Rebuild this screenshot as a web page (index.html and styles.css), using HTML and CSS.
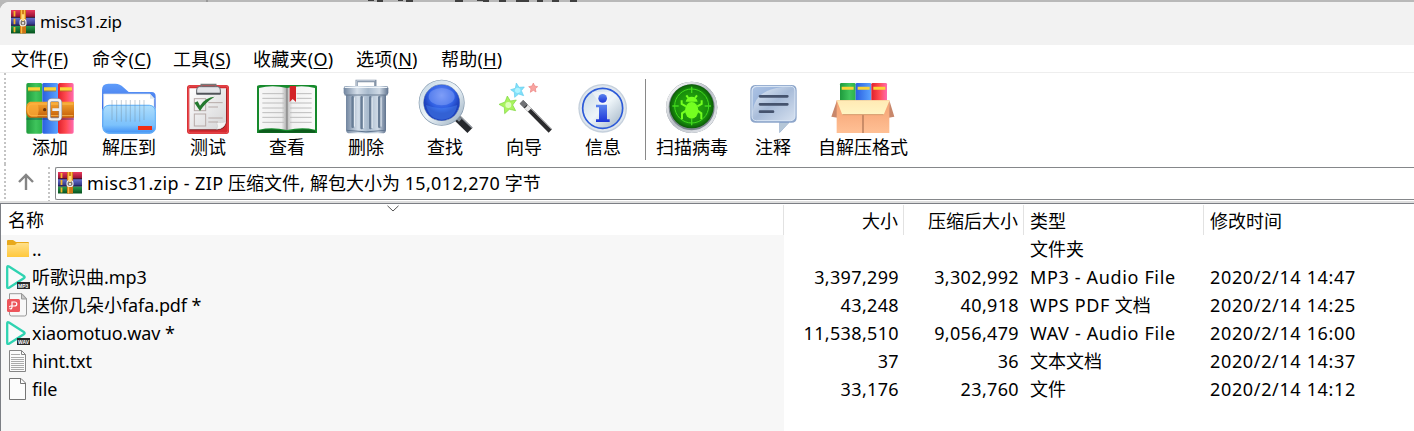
FILE: index.html
```html
<!DOCTYPE html>
<html lang="zh-CN">
<head>
<meta charset="utf-8">
<title>misc31.zip</title>
<link rel="stylesheet" href="styles.css">
</head>
<body>
<svg class="defs" width="0" height="0" aria-hidden="true">
  <defs>
    <linearGradient id="gGreen"><stop offset="0" stop-color="#1e9a3c"/><stop offset=".6" stop-color="#3fc45c"/><stop offset="1" stop-color="#2cb24a"/></linearGradient>
    <linearGradient id="gBlue"><stop offset="0" stop-color="#2a5fe0"/><stop offset="1" stop-color="#5aa4ff"/></linearGradient>
    <linearGradient id="gRed"><stop offset="0" stop-color="#e0202c"/><stop offset=".5" stop-color="#ff4a50"/><stop offset="1" stop-color="#ff6ab0"/></linearGradient>
    <linearGradient id="gBelt" x2="0" y2="1"><stop offset="0" stop-color="#f8a830"/><stop offset="1" stop-color="#c25c08"/></linearGradient>
    <linearGradient id="gSilver" x2="1" y2="1"><stop offset="0" stop-color="#fff"/><stop offset=".5" stop-color="#b9bec6"/><stop offset="1" stop-color="#eef0f4"/></linearGradient>
    <linearGradient id="gFolderBack" x2="0" y2="1"><stop offset="0" stop-color="#5f9dfa"/><stop offset="1" stop-color="#2046d8"/></linearGradient>
    <linearGradient id="gFolder" x2="0" y2="1"><stop offset="0" stop-color="#a9dcfc" stop-opacity=".93"/><stop offset=".7" stop-color="#7cc2fc"/><stop offset="1" stop-color="#3d8df4"/></linearGradient>
    <linearGradient id="gPaper" x2="1" y2="1"><stop offset="0" stop-color="#fff"/><stop offset="1" stop-color="#d4d4d6"/></linearGradient>
    <linearGradient id="gPage"><stop offset="0" stop-color="#f7f7f7"/><stop offset=".8" stop-color="#eee"/><stop offset="1" stop-color="#a9a9a9"/></linearGradient>
    <linearGradient id="gPage2"><stop offset="0" stop-color="#bbb"/><stop offset=".2" stop-color="#f2f2f2"/><stop offset="1" stop-color="#fafafa"/></linearGradient>
    <linearGradient id="gBin"><stop offset="0" stop-color="#71859f"/><stop offset=".3" stop-color="#d5dfea"/><stop offset=".55" stop-color="#a7b9cc"/><stop offset=".8" stop-color="#cfdae6"/><stop offset="1" stop-color="#60738e"/></linearGradient>
    <radialGradient id="gLens" cy=".3"><stop offset="0" stop-color="#6e90f4"/><stop offset=".7" stop-color="#3161e4"/><stop offset="1" stop-color="#1f43bd"/></radialGradient>
    <linearGradient id="gRim" x2="1" y2="1"><stop offset="0" stop-color="#c4d6e4"/><stop offset=".5" stop-color="#eef5f9"/><stop offset="1" stop-color="#9cb0c2"/></linearGradient>
    <linearGradient id="gInfo" x2="0" y2="1"><stop offset="0" stop-color="#5c86ee"/><stop offset="1" stop-color="#1c35d8"/></linearGradient>
    <radialGradient id="gScan"><stop offset="0" stop-color="#2cb50c"/><stop offset=".8" stop-color="#178a0c"/><stop offset="1" stop-color="#0c5c08"/></radialGradient>
    <linearGradient id="gNote" x2="1" y2="1"><stop offset="0" stop-color="#e6effa"/><stop offset=".5" stop-color="#a8bcd9"/><stop offset="1" stop-color="#d5e0ef"/></linearGradient>
    <linearGradient id="gBox" x2="0" y2="1"><stop offset="0" stop-color="#f4a070"/><stop offset="1" stop-color="#ffc095"/></linearGradient>
    <linearGradient id="gFlap" x2="0" y2="1"><stop offset="0" stop-color="#ffeab4"/><stop offset="1" stop-color="#fff5c4"/></linearGradient>
    <linearGradient id="gDir" x2="0" y2="1"><stop offset="0" stop-color="#ffe08a"/><stop offset="1" stop-color="#ffc83c"/></linearGradient>
    <linearGradient id="gB1" x2="0" y2="1"><stop offset="0" stop-color="#e93a5c"/><stop offset="1" stop-color="#8c0c30"/></linearGradient>
    <linearGradient id="gB2" x2="0" y2="1"><stop offset="0" stop-color="#6a74d0"/><stop offset="1" stop-color="#262a78"/></linearGradient>
    <linearGradient id="gB3" x2="0" y2="1"><stop offset="0" stop-color="#2c9c50"/><stop offset="1" stop-color="#04501c"/></linearGradient>
    <symbol id="rar" viewBox="0 0 24 22" preserveAspectRatio="none">
      <rect width="24" height="7" fill="url(#gB1)"/><rect y="7" width="24" height="7.5" fill="url(#gB2)"/><rect y="14.500" width="24" height="7" fill="url(#gB3)"/>
      <path d="M0 6.800h24M0 14h24" stroke="#20142e" stroke-width=".8"/>
      <path d="M3.500 1v5M3.500 8v5M3.500 15.500v5" stroke="#f5b72c" stroke-width="1.800"/>
      <rect x="9" width="6" height="21.500" fill="#cf7416"/><path d="M10.500 0v21.500M13.500 0v8" stroke="#f9be45" stroke-width="1.300"/>
      <path d="M9 11Q9 8.500 12 8.500T15 11V12.500Q15 14.500 12 14.500T9 12.500Z" fill="#80756c" stroke="#eee" stroke-width="1.100"/><path d="M12 4v6" stroke="#ffdc7a" stroke-width="2.400"/><path d="M12 11v2" stroke="#fff" stroke-width="1.500"/>
    </symbol>
    <symbol id="play" viewBox="0 0 24 24">
      <path d="M1.200 2.500Q1.200 .5 3 1.500L17.800 11Q19.500 12.200 17.800 13.300L3 22.800Q1.200 23.600 1.200 22Z" fill="#fafafa" stroke="#2fd3b1" stroke-width="2.300" stroke-linejoin="round"/>
      <rect x="11" y="17" width="13" height="7" fill="#292929"/>
    </symbol>
  </defs>
</svg>

<div class="backdrop"><svg class="behind" viewBox="0 0 1414 2"><path d="M368 0h6v1h-6zM377 0h6v2h-6zM398 0h5v1h-5zM406 0h7v2h-7zM455 0h8v2h-8zM477 0h12v1h-12zM483 1h6v1h-6zM499 0h7v2h-7zM516 0h13v2h-13zM537 0h6v2h-6zM552 0h7v2h-7zM570 0h7v2h-7z" fill="#404040"/><path d="M206 0h2v2h-2z" fill="#999"/></svg></div>
<main class="window">
  <header class="titlebar"><svg class="title-icon"><use href="#rar"/></svg><span>misc31.zip</span></header>
  <nav class="menu">
    <span class="m1">文件(<u>F</u>)</span><span class="m2">命令(<u>C</u>)</span><span class="m3">工具(<u>S</u>)</span><span class="m4">收藏夹(<u>O</u>)</span><span class="m5">选项(<u>N</u>)</span><span>帮助(<u>H</u>)</span>
  </nav>

  <section class="toolbar">
    <div class="tool"><svg viewBox="69 33 162 162">
      <rect x="79" y="39" width="48" height="152" rx="5" fill="url(#gGreen)"/><rect x="127" y="39" width="47" height="152" rx="4" fill="url(#gBlue)"/><rect x="174" y="39" width="47" height="152" rx="5" fill="url(#gRed)"/>
      <path d="M84 57h36M132 57h36M180 57h36" stroke="#fbd437" stroke-width="10"/><path d="M84 63h36M132 63h36M180 63h36" stroke="#a07a20" stroke-width="2"/>
      <path d="M79 143h143v7H79Z" fill="#103060" opacity=".35"/>
      <path d="M90 95H222V143H90Q78 140 78 119T90 95Z" fill="url(#gBelt)"/><path d="M84 119Q84 102 95 102H220M84 119Q84 136 95 137H220" fill="none" stroke="#ffc45a" stroke-width="2.500"/><path d="M80 119Q82 99 95 99H112Q120 119 112 140H95Q82 138 80 119Z" fill="#ffb13c" opacity=".7"/>
      <circle cx="134" cy="119" r="5" fill="#6b3408"/><rect x="147" y="90" width="34" height="58" rx="8" fill="none" stroke="#8c8c90" stroke-width="11"/><rect x="147" y="90" width="34" height="58" rx="8" fill="none" stroke="#f0f1f4" stroke-width="7"/><path d="M157 119h25" stroke="#e9edf2" stroke-width="8"/>
    </svg><span>添加</span></div>
    <div class="tool"><svg viewBox="306 33 162 162">
      <path d="M306 60Q306 41 325 41H346Q360 41 370 52L386 66H455Q467 66 467 80V170H306Z" fill="url(#gFolderBack)"/>
      <path d="M311 72H450L462 85V150H311Z" fill="#fff" stroke="#d7dfe8" stroke-width="2"/><path d="M450 72v14h12" fill="#dce7f0"/>
      <rect x="307" y="104" width="161" height="87" rx="20" fill="url(#gFolder)"/><rect x="309" y="106" width="157" height="83" rx="18" fill="none" stroke="#68b4f8" stroke-width="3"/>
      <path d="M336 90v60M350 90v65M364 90v65M378 90v65M391 90v65M405 90v65M419 90v65M432 90v60" stroke="#728ba0" stroke-width="2.500" opacity=".5"/>
      <rect x="414" y="168" width="42" height="12" fill="#f02c12"/>
    </svg><span>解压到</span></div>
    <div class="tool"><svg viewBox="543 33 162 162">
      <rect x="561" y="45" width="126" height="147" rx="9" fill="#d52b31"/><rect x="565" y="48" width="119" height="141" rx="7" fill="none" stroke="#ec5557" stroke-width="3"/>
      <path d="M570 57H680V157Q676 179 652 181H570Z" fill="#802024"/><path d="M568 55H678V155Q674 176 650 178H568Z" fill="url(#gPaper)"/>
      <path d="M678 155Q665 160 650 157Q656 170 650 178Q674 176 678 155Z" fill="#f4f4f4" stroke="#bbb"/>
      <path d="M590 73V60Q590 50 598 50H653Q661 50 661 60V73Z" fill="#e2e4e8" stroke="#62656b" stroke-width="3"/><path d="M604 50V44H647V50" fill="none" stroke="#777" stroke-width="5"/><path d="M590 70h72" stroke="#505358" stroke-width="4"/>
      <g fill="none" stroke="#b6aaa8" stroke-width="3"><rect x="583" y="86" width="34" height="36"/><rect x="583" y="132" width="34" height="36"/><path d="M625 98h43M625 111h29M625 144h43M625 156h29"/></g>
      <path d="M583 98L593 94 600 107Q617 81 644 80Q617 96 600 123Z" fill="#247a30"/>
    </svg><span>测试</span></div>
    <div class="tool"><svg viewBox="60 33 162 162">
      <path d="M51 50Q51 45 60 45H222Q231 45 231 50V189H51Z" fill="#168a2c"/><path d="M56 182Q95 174 141 184Q187 174 226 182V188H56Z" fill="#0c5a1c"/>
      <path d="M57 54Q96 44 141 54V180Q96 170 57 179Z" fill="url(#gPage)"/><path d="M141 54Q186 44 225 54V179Q186 170 141 180Z" fill="url(#gPage2)"/>
      <path d="M67 71H132M67 85H132M67 99H132M67 114H132M67 128H132M67 142H132M67 157H132M150 99H215M150 114H215M150 128H215M150 142H215M150 157H215M170 71H215M170 85H215" stroke="#bcbcbc" stroke-width="3"/>
      <path d="M141 54v126" stroke="#777" stroke-width="3"/><path d="M149 48H168V96L158 87 149 96Z" fill="#d32328"/>
    </svg><span>查看</span></div>
    <div class="tool"><svg viewBox="297 33 162 162">
      <path d="M350 50V33H406V50" fill="none" stroke="#8494a8" stroke-width="7"/><path d="M350 49V32H405" fill="none" stroke="#dce4ee" stroke-width="2"/>
      <path d="M318 70H438V179Q438 190 427 190H329Q318 190 318 179Z" fill="url(#gBin)"/>
      <path d="M338 82v88M365 82v92M391 82v92M418 82v88" stroke="#687d96" stroke-width="8" stroke-linecap="round"/><path d="M343 82v88M370 82v92M396 82v92M423 82v88" stroke="#edf3f9" stroke-width="3"/>
      <path d="M320 181Q378 190 436 181" stroke="#627791" stroke-width="3" fill="none"/><rect x="311" y="48" width="134" height="27" rx="7" fill="url(#gBin)"/><path d="M314 52H442" stroke="#f0f5fa" stroke-width="4"/><path d="M314 75H442" stroke="#66788e" stroke-width="3"/>
    </svg><span>删除</span></div>
    <div class="tool"><svg viewBox="534 33 162 162">
      <path d="M653 145L690 181" stroke="#25272b" stroke-width="22"/><path d="M660 139L696 173" stroke="#93989f" stroke-width="4"/><path d="M650 148L658 140" stroke="#858f9a" stroke-width="20"/>
      <circle cx="605" cy="98" r="61" fill="none" stroke="#8398ad" stroke-width="16"/><circle cx="605" cy="98" r="61" fill="none" stroke="url(#gRim)" stroke-width="12"/><circle cx="605" cy="98" r="54" fill="url(#gLens)"/>
      <ellipse cx="605" cy="80" rx="39" ry="26" fill="#9eb6ff" opacity=".35"/><path d="M558 105Q604 124 652 105Q644 148 605 149Q567 148 558 105Z" fill="#5a9cff" opacity=".35"/>
    </svg><span>查找</span></div>
    <div class="tool"><svg viewBox="51 33 162 162">
      <path d="M125 96L211 183" stroke="#2b2b2d" stroke-width="14"/><path d="M130 94L215 179" stroke="#909094" stroke-width="3"/><path d="M124 95L137 108" stroke="#707175" stroke-width="15"/><path d="M139 110L149 120" stroke="#e8e8e8" stroke-width="15"/>
      <path d="M82 78L91 93 109 90 98 105 107 122 88 118 74 131 73 112 57 103 75 96Z" fill="#a9f45e" stroke="#7cd63c" stroke-width="2"/><circle cx="85" cy="105" r="9" fill="#dcffb8"/>
      <path d="M109 39L117 52 133 51 124 62 131 77 116 72 104 82 103 67 92 59 106 55Z" fill="#80e0fa" stroke="#62cbed" stroke-width="2"/><circle cx="113" cy="61" r="8" fill="#b0f4ff"/>
      <path d="M160 39L164 48 173 50 166 56 168 66 160 61 151 67 153 56 146 50 156 48Z" fill="#f8a4a0" stroke="#ec817e" stroke-width="2"/>
    </svg><span>向导</span></div>
    <div class="tool"><svg viewBox="288 33 162 162">
      <circle cx="368" cy="115" r="73" fill="#c5d0dc"/><circle cx="368" cy="115" r="69" fill="#dfe6ed"/><circle cx="368" cy="115" r="60" fill="url(#gRim)" stroke="#2c5ad8" stroke-width="5"/><path d="M368 115L335 65H400Z" fill="#fff" opacity=".45"/>
      <circle cx="368" cy="85" r="13" fill="url(#gInfo)"/><path d="M348 104H381V148H389V156H348V148H357V112H348Z" fill="url(#gInfo)"/>
    </svg><span>信息</span></div>
    <i class="separator"></i>
    <div class="tool scan"><svg viewBox="555 33 162 162">
      <circle cx="635" cy="112" r="77" fill="#7d878f"/><circle cx="635" cy="112" r="73" fill="none" stroke="url(#gSilver)" stroke-width="8"/><circle cx="635" cy="109" r="66" fill="url(#gScan)"/>
      <circle cx="635" cy="108" r="51" fill="none" stroke="#42d91d" stroke-width="3"/><path d="M635 50V69M635 147V166M577 108H596M674 108H693" stroke="#42d91d" stroke-width="4"/>
      <ellipse cx="635" cy="121" rx="20" ry="25" fill="#74ff20"/><path d="M617 95Q621 80 635 80T653 95Z" fill="#74ff20"/><path d="M625 84L619 76M645 84L651 76M618 109L605 102V91M652 109L665 102V91M618 122L606 130V148M652 122L664 130V148" stroke="#74ff20" stroke-width="6" fill="none"/>
    </svg><span>扫描病毒</span></div>
    <div class="tool note"><svg viewBox="138 33 162 162">
      <path d="M168 45H274Q290 45 290 61V143Q290 158 274 158H267L238 190V158H168Q151 158 151 143V61Q151 45 168 45Z" fill="#8ca5ca"/><path d="M170 49H272Q285 49 285 63V139Q285 152 271 152H170Q156 152 156 139V63Q156 49 170 49Z" fill="url(#gNote)" stroke="#dce8f6" stroke-width="3"/>
      <path d="M158 123Q166 59 248 51H171Q158 51 158 64Z" fill="#86a5d5" opacity=".6"/><path d="M240 159H267L239 187Z" fill="#b4c6d7"/><path d="M180 79H262M180 103H262M180 125H219" stroke="#45536e" stroke-width="8" stroke-linecap="round"/>
    </svg><span>注释</span></div>
    <div class="tool sfx"><svg viewBox="408 33 162 162">
      <rect x="420" y="39" width="47" height="60" rx="4" fill="url(#gGreen)"/><rect x="467" y="39" width="47" height="60" rx="4" fill="url(#gBlue)"/><rect x="514" y="39" width="47" height="60" rx="4" fill="url(#gRed)"/><path d="M425 55h36M473 55h36M520 55h36" stroke="#fbd437" stroke-width="9"/>
      <path d="M411 91L394 140 413 143ZM568 91L583 140 566 143Z" fill="#c8876b"/><path d="M410 91H568V189H410Z" fill="url(#gBox)"/><path d="M489 133v56" stroke="#b27757" stroke-width="4"/><path d="M410 91H569L551 134H427Z" fill="url(#gFlap)"/><path d="M427 134H551" stroke="#d59a6c" stroke-width="3"/>
    </svg><span>自解压格式</span></div>
  </section>

  <section class="address">
    <button class="up" aria-label="Up"><svg viewBox="0 0 18 18"><path d="M9 17V2M2 9L9 2L16 9" fill="none" stroke="#858585" stroke-width="2.400"/></svg></button>
    <div class="path"><svg class="path-icon"><use href="#rar"/></svg><span class="pathtext"><b>misc31.zip - ZIP</b> 压缩文件<b>,</b> 解包大小为 <b>15,012,270</b> 字节</span></div>
  </section>

  <section class="list">
    <div class="row head"><div class="name">名称<svg class="sort" viewBox="0 0 12 7"><path d="M.5.8L6 6 11.500.8" fill="none" stroke="#555"/></svg></div><div class="num">大小</div><div class="num">压缩后大小</div><div class="type">类型</div><div class="date">修改时间</div></div>
    <div class="row"><div class="name"><svg class="fi" viewBox="0 0 24 24"><path d="M1 4Q1 3 2 3H7L10 5H22Q23 5 23 6V19Q23 20 22 20H2Q1 20 1 19Z" fill="#e8a91c"/><path d="M1 8H9L11 6H22Q23 6 23 7V19Q23 20 22 20H2Q1 20 1 19Z" fill="url(#gDir)"/></svg><b>..</b></div><div class="num"></div><div class="num"></div><div class="type">文件夹</div><div class="date"></div></div>
    <div class="row"><div class="name"><svg class="fi" viewBox="0 0 24 24"><use href="#play"/><text x="12" y="22.500" class="tag">MP3</text></svg>听歌识曲<b>.mp3</b></div><div class="num"><b>3,397,299</b></div><div class="num"><b>3,302,992</b></div><div class="type"><b>MP3 - Audio File</b></div><div class="date"><b>2020/2/14 14:47</b></div></div>
    <div class="row"><div class="name"><svg class="fi" viewBox="0 0 24 24"><path d="M3.500.7H16L20.500 5.500V21Q20.500 23 18.500 23H5.500Q3.500 23 3.500 21Z" fill="#f8f8f8" stroke="#999"/><path d="M15.500.7V6H20.500Z" fill="#ccc" stroke="#999"/><rect x="1" y="6" width="13" height="13" rx="1.500" fill="#ed555b"/><path d="M3.500 15.500Q6 16.500 6 14V9H8.500Q10.800 9 10.800 11T8.500 13H4.500Q3.500 13 3.500 14.200" fill="none" stroke="#fff" stroke-width="1.200"/></svg>送你几朵小<b>fafa.pdf *</b></div><div class="num"><b>43,248</b></div><div class="num"><b>40,918</b></div><div class="type"><b>WPS PDF</b> 文档</div><div class="date"><b>2020/2/14 14:25</b></div></div>
    <div class="row"><div class="name"><svg class="fi" viewBox="0 0 24 24"><use href="#play"/><text x="12" y="22.500" class="tag">WAV</text></svg><b>xiaomotuo.wav *</b></div><div class="num"><b>11,538,510</b></div><div class="num"><b>9,056,479</b></div><div class="type"><b>WAV - Audio File</b></div><div class="date"><b>2020/2/14 16:00</b></div></div>
    <div class="row"><div class="name"><svg class="fi" viewBox="0 0 24 24"><path d="M3.500 1.500H15.500L19.500 5.500V22.500H3.500Z" fill="#fbfbfb" stroke="#858585"/><path d="M15.500 1.500V5.500H19.500" fill="none" stroke="#858585"/><path d="M5 5.500H14M5 8.500H18M5 10.500H18M5 12.500H18M5 14.500H18M5 16.500H18M5 18.500H18M5 20.500H18" stroke="#aaa"/></svg><b>hint.txt</b></div><div class="num"><b>37</b></div><div class="num"><b>36</b></div><div class="type">文本文档</div><div class="date"><b>2020/2/14 14:37</b></div></div>
    <div class="row"><div class="name"><svg class="fi" viewBox="0 0 24 24"><path d="M3.500 1.500H15L19.500 6V22.500H3.500Z" fill="#fcfcfc" stroke="#757575"/><path d="M14.500 1.500V6.500H19.500" fill="none" stroke="#757575"/></svg><b>file</b></div><div class="num"><b>33,176</b></div><div class="num"><b>23,760</b></div><div class="type">文件</div><div class="date"><b>2020/2/14 14:12</b></div></div>
    <div class="row rest"><div class="name"></div></div>
  </section>
</main>
</body>
</html>
```

FILE: styles.css
```css
* { box-sizing: border-box; }
body { margin: 0; width: 1414px; height: 431px; overflow: hidden; background: #b8b8b8; color: #000; font: 18px/28px "Noto Sans", "Noto Sans CJK SC", sans-serif; }
b { font-weight: 400; letter-spacing: .65px; }
.defs { position: absolute; }
.backdrop { height: 2px; background: #b9b9b9; }
.behind { display: block; width: 1414px; height: 2px; }
.window { height: 429px; display: flex; flex-direction: column; background: #fff; border-radius: 9px 0 0 0; overflow: hidden; }
.titlebar { height: 43px; flex: none; display: flex; align-items: center; padding: 0 0 4px 11px; background: #f2f2f2; font-size: 17px; letter-spacing: -.15px; }
.title-icon { width: 24px; height: 24px; margin-right: 5px; }
.menu { height: 28px; flex: none; display: flex; padding-left: 11px; line-height: 28px; letter-spacing: .25px; border-bottom: 1px solid #eee; }
.menu span { flex: none; width: 81px; }
.menu u { text-decoration-thickness: 1px; text-underline-offset: 2px; }
.menu .m3 { width: 80px; }
.menu .m4 { width: 103px; }
.menu .m5 { width: 85px; }
.toolbar { height: 91px; flex: none; display: flex; margin-left: 4px; padding: 8px 0 0 6px; border-left: 2px dotted #c4c4c4; }
.tool { width: 79px; flex: none; display: flex; flex-direction: column; align-items: center; white-space: nowrap; margin-left: -1.500px; margin-right: 1.500px; }
.tool svg { width: 54px; height: 54px; overflow: visible; flex: none; }
.tool span { line-height: 24px; }
.separator { width: 1px; height: 81px; margin: -2px 0 0 1px; background: #898989; flex: none; }
.scan { width: 92px; margin: 0; }
.note { width: 70px; margin: 0; }
.sfx { width: 110px; margin: 0; }
.address { height: 39px; flex: none; display: flex; margin-left: 4px; border-left: 2px dotted #c4c4c4; padding-top: 3px; }
.up { width: 44px; height: 35px; border: 0; border-right: 2px dotted #c4c4c4; background: none; padding: 0 0 5px 11px; display: flex; align-items: center; }
.up svg { width: 18px; height: 18px; }
.path { flex: 1; height: 33px; margin-left: 5px; border: 1px solid #85878a; border-right: 0; border-radius: 2px 0 0 2px; display: flex; align-items: center; padding: 0 0 2px 2px; }
.path-icon { width: 24px; height: 22px; margin-right: 5px; }
.pathtext { white-space: pre; }
.pathtext b { letter-spacing: .35px; }
.list { flex: 1; border-top: 1px solid #7c7f85; border-left: 1px solid #7c7f85; box-shadow: 0 -2px #dedede; }
.row { display: grid; grid-template: 100% / 783px 120px 120px 180px 1fr; height: 28px; line-height: 28px; white-space: nowrap; }
.name { background: #f7f7f7; display: flex; align-items: center; padding-left: 5px; }
.name b { letter-spacing: -.1px; }
.fi { width: 24px; height: 24px; margin-right: 2px; flex: none; }
.num { text-align: right; padding-right: 5px; }
.num b { letter-spacing: .35px; }
.type, .date { padding-left: 6px; }
.head { height: 31px; line-height: 32px; padding-top: 1px; }
.head > div { border-right: 1px solid #e2e2e2; }
.head .name { background: #fff; padding-left: 7px; position: relative; }
.head .date { border: 0; }
.sort { position: absolute; left: 386px; top: 0; width: 12px; height: 7px; }
.rest { height: 56px; }
.tag { font: 700 5px "Liberation Sans", sans-serif; fill: #fff; }
```
